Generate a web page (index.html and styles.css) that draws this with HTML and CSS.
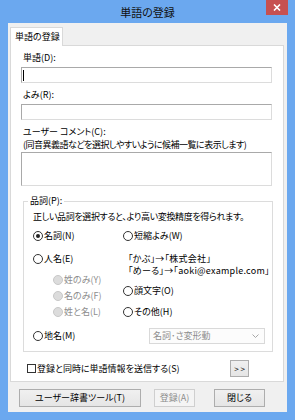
FILE: index.html
```html
<!DOCTYPE html>
<html lang="ja">
<head>
<meta charset="utf-8">
<title>単語の登録</title>
<link rel="stylesheet" href="styles.css">
</head>
<body>
<div class="window">
  <div class="titlebar">
    <span class="title">単語の登録</span>
    <span class="close"><svg width="8" height="7" viewBox="0 0 8 7"><path d="M1 0.5L7 6.5M7 0.5L1 6.5" stroke="#fff" stroke-width="1.6" fill="none"/></svg></span>
  </div>
  <div class="client">
    <div class="tabs"><div class="tab">単語の登録</div></div>
    <div class="panel">
      <div class="label">単語(D):</div>
      <div class="input"><span class="caret"></span></div>
      <div class="label">よみ(R):</div>
      <div class="input"></div>
      <div class="label label-comment">ユーザー コメント(C):</div>
      <div class="hint">(同音異義語などを選択しやすいように候補一覧に表示します)</div>
      <div class="input textarea"></div>
      <fieldset class="group">
        <legend>品詞(P):</legend>
        <p class="desc">正しい品詞を選択すると、より高い変換精度を得られます。</p>
        <div class="cols">
          <div class="col col-left">
            <div class="opt"><span class="radio checked"></span>名詞(N)</div>
            <div class="opt opt-person"><span class="radio"></span>人名(E)</div>
            <div class="subopts">
              <div class="opt disabled"><span class="radio"></span>姓のみ(Y)</div>
              <div class="opt disabled"><span class="radio"></span>名のみ(F)</div>
              <div class="opt disabled"><span class="radio"></span>姓と名(L)</div>
            </div>
            <div class="opt opt-place"><span class="radio"></span>地名(M)</div>
          </div>
          <div class="col col-right">
            <div class="opt"><span class="radio"></span>短縮よみ(W)</div>
            <div class="examples">
              <div>「かぶ」→「株式会社」</div>
              <div>「めーる」→「aoki@example.com」</div>
            </div>
            <div class="opt"><span class="radio"></span>顔文字(O)</div>
            <div class="opt"><span class="radio"></span>その他(H)</div>
            <div class="select">
              <span>名詞･さ変形動</span>
              <svg width="7" height="4" viewBox="0 0 7 4"><path d="M0.5 0.5L3.5 3.5L6.5 0.5" stroke="#a8a8a8" fill="none"/></svg>
            </div>
          </div>
        </div>
      </fieldset>
      <div class="sendrow">
        <div class="check"><span class="box"></span>登録と同時に単語情報を送信する(S)</div>
        <button class="btn btn-more">&gt; &gt;</button>
      </div>
    </div>
    <div class="buttons">
      <button class="btn btn-tool">ユーザー辞書ツール(T)</button>
      <button class="btn btn-register" disabled>登録(A)</button>
      <button class="btn btn-close">閉じる</button>
    </div>
  </div>
</div>
</body>
</html>
```

FILE: styles.css
```css
* { box-sizing: border-box; }
html, body { margin: 0; padding: 0; }
body {
  width: 295px;
  height: 420px;
  overflow: hidden;
  font-family: "Noto Sans CJK JP", "Noto Sans", sans-serif;
  font-size: 9px;
  line-height: 14px;
  color: #000;
  font-feature-settings: "palt";
}
.window {
  width: 295px;
  height: 420px;
  background: #6ba8ef;
  display: flex;
  flex-direction: column;
}
.titlebar {
  height: 23px;
  flex: none;
  display: grid;
  grid-template-columns: 1fr auto 1fr;
  align-items: start;
}
.title {
  grid-column: 2;
  font-size: 11px;
  line-height: 15px;
  margin-top: 5px;
  color: #111;
}
.close {
  grid-column: 3;
  justify-self: end;
  margin-right: 7px;
  width: 22px;
  height: 15px;
  background: #c75050;
  display: flex;
  align-items: center;
  justify-content: center;
}
.close svg { display: block; }
.client {
  flex: 1;
  margin: 0 8px 8px;
  background: #f0f0f0;
  padding: 4px 3px 0 2px;
  display: flex;
  flex-direction: column;
}
.tabs { display: flex; }
.tab {
  width: 53px;
  height: 19px;
  margin-bottom: -1px;
  background: #fff;
  border: 1px solid #d9d9d9;
  border-bottom: none;
  padding-left: 4px;
  line-height: 17px;
  position: relative;
  z-index: 1;
}
.panel {
  background: #fff;
  border: 1px solid #d9d9d9;
  padding: 5px 11px 4px 10px;
}
.label {
  padding-left: 2px;
  margin-bottom: 2px;
}
.label-comment { margin: 2px 0 0; line-height: 13px; }
.hint {
  padding-left: 2px;
  line-height: 13px;
  margin-bottom: 1px;
  letter-spacing: -0.5px;
  white-space: nowrap;
}
.input {
  height: 16px;
  border: 1px solid;
  border-color: #a9a9a9 #dcdcdc #dcdcdc #a9a9a9;
  background: #fff;
  margin-bottom: 5px;
}
.caret {
  display: block;
  width: 1px;
  height: 11px;
  margin: 2px 0 0 1px;
  background: #000;
}
.textarea { height: 34px; margin-bottom: 0; }
.group {
  margin: 8px -1px 0 2px;
  padding: 2px 6px 7px 9px;
  border: 1px solid #dcdcdc;
  min-width: 0;
}
.group legend {
  padding: 0 2px;
  margin-left: -5px;
  line-height: 14px;
}
.desc {
  margin: 0;
  line-height: 14px;
  letter-spacing: -0.35px;
  white-space: nowrap;
}
.cols {
  display: flex;
  margin-top: 5px;
}
.col { display: flex; flex-direction: column; }
.col-left { width: 90px; flex: none; gap: 7px; }
.col-right { flex: 1; }
.opt {
  display: flex;
  align-items: center;
  height: 14px;
  white-space: nowrap;
}
.radio {
  width: 10px;
  height: 10px;
  border: 1px solid #333;
  border-radius: 50%;
  background: #fff;
  margin-right: 1px;
  flex: none;
  display: flex;
  align-items: center;
  justify-content: center;
}
.radio.checked::after {
  content: "";
  width: 4px;
  height: 4px;
  border-radius: 50%;
  background: #222;
}
.subopts {
  display: flex;
  flex-direction: column;
  gap: 2px;
  padding-left: 20px;
}
.opt.disabled { color: #8d8d8d; }
.opt.disabled .radio { background: #dcdcdc; border-color: #c8c8c8; }
.opt-person { margin-top: 2px; }
.opt-place { margin-top: 3px; }
.col-right .opt + .opt { margin-top: 7px; }
.examples {
  margin: 10px 0 7px;
  padding-left: 5px;
  line-height: 12px;
  white-space: nowrap;
  letter-spacing: 0.25px;
}
.select {
  margin: 9px 0 0 26px;
  width: 116px;
  height: 16px;
  border: 1px solid #d9d9d9;
  background: #fcfcfc;
  color: #8d8d8d;
  display: flex;
  align-items: center;
  justify-content: space-between;
  padding: 0 5px 0 3px;
}
.select svg { display: block; }
.sendrow {
  display: flex;
  align-items: center;
  margin-top: 8px;
  height: 17px;
}
.check {
  flex: 1;
  display: flex;
  align-items: center;
  padding-left: 6px;
  white-space: nowrap;
}
.box {
  width: 9px;
  height: 9px;
  border: 1px solid #333;
  background: #fff;
  margin-right: 1px;
  flex: none;
}
.btn {
  font: inherit;
  font-feature-settings: "palt";
  color: #000;
  height: 18px;
  border: 1px solid #adadad;
  background: linear-gradient(#f0f0f0, #e5e5e5);
  padding: 0;
  margin: 0;
  line-height: 16px;
  text-align: center;
}
.btn-more {
  width: 19px;
  height: 17px;
  margin-right: 23px;
  font-size: 8px;
}
.buttons {
  display: flex;
  margin-top: 7px;
  padding-left: 9px;
}
.btn-tool { width: 122px; }
.btn-register {
  width: 41px;
  margin-left: 13px;
  color: #8c8c8c;
  border-color: #cfcfcf;
  background: #f4f4f4;
}
.btn-close { width: 51px; margin-left: 19px; }
```
